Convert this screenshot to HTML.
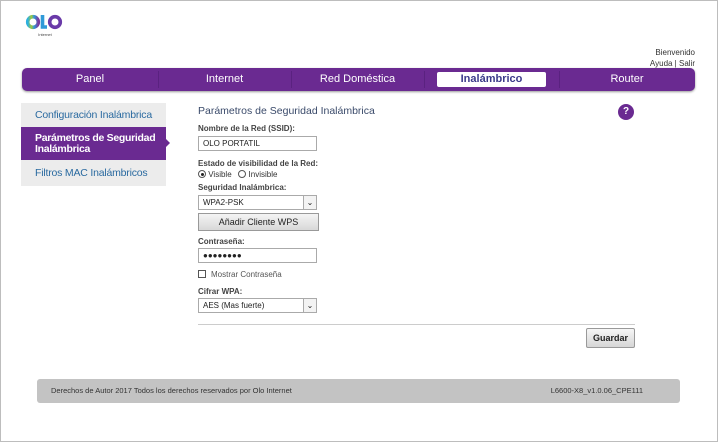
<!DOCTYPE html>
<html><head><meta charset="utf-8"><style>
*{margin:0;padding:0;box-sizing:border-box}
body{width:718px;height:442px;background:#fff;font-family:"Liberation Sans",Arial,sans-serif;position:relative;overflow:hidden}
.frame{position:absolute;left:0;top:0;width:718px;height:442px;border:1px solid #bdbdbd}
.abs{position:absolute}
.nav{left:22px;top:68px;width:673px;height:23px;background:#6a2a91;border-radius:5px;box-shadow:0 1px 2px #999}
.tab{position:absolute;top:0;height:23px;line-height:23px;color:#fff;font-size:11px;text-align:center}
.sep{position:absolute;top:3px;width:1px;height:17px;background:#5a2280}
.side{left:21px;width:145px;font-size:10.5px;padding-left:14px;background:#ececec;color:#2a6aa0;white-space:nowrap;letter-spacing:-0.2px}
.lbl{position:absolute;left:198px;font-size:8px;color:#444;font-weight:bold}
.inp{position:absolute;left:198px;width:119px;height:15px;border:1px solid #aaa;font-size:8px;line-height:13px;padding-left:4px;color:#222;background:#fff}
.dd{position:absolute;right:0;top:0;width:13px;height:13px;border-left:1px solid #aaa;background:#f3f3f3;font-size:8px;text-align:center;line-height:13px}
</style></head><body>
<div class="frame"></div>
<svg class="abs" style="left:25px;top:13px" width="40" height="26" viewBox="0 0 40 26">
<defs><linearGradient id="g" x1="0" x2="1"><stop offset="0" stop-color="#2bb0e0"/><stop offset=".35" stop-color="#a0c83c"/><stop offset=".6" stop-color="#2f9ad8"/><stop offset="1" stop-color="#7a3aa0"/></linearGradient></defs>
<circle cx="8" cy="9" r="5.3" fill="none" stroke="url(#g)" stroke-width="3.6"/>
<path d="M17.5 2v12h4.5" fill="none" stroke="#2f9ad8" stroke-width="3.6"/>
<circle cx="30" cy="9" r="5.3" fill="none" stroke="#6a3aa8" stroke-width="3.6"/>
<text x="20" y="23" font-size="4" text-anchor="middle" fill="#444" font-family="Liberation Sans">Internet</text>
</svg>
<div class="abs" style="right:23px;top:47px;font-size:8px;color:#333;text-align:right;line-height:11px">Bienvenido<br>Ayuda | Salir</div>
<div class="abs nav">
<div class="tab" style="left:0;width:136px">Panel</div><div class="sep" style="left:136px"></div>
<div class="tab" style="left:136px;width:133px">Internet</div><div class="sep" style="left:269px"></div>
<div class="tab" style="left:269px;width:133px">Red Doméstica</div><div class="sep" style="left:402px"></div>
<div class="abs" style="left:415px;top:4px;width:109px;height:15px;background:#fff;border-radius:2px;color:#3a3a8a;font-size:11px;font-weight:bold;text-align:center;line-height:15px">Inalámbrico</div>
<div class="sep" style="left:537px"></div>
<div class="tab" style="left:537px;width:136px">Router</div>
</div>
<div class="abs side" style="top:103px;height:24px;line-height:24px">Configuración Inalámbrica</div>
<div class="abs side" style="top:127px;height:33px;background:#6a2a91;color:#fff;font-weight:bold;line-height:11px;padding-top:6px;letter-spacing:-0.3px">Parámetros de Seguridad<br>Inalámbrica</div>
<div class="abs" style="left:166px;top:139px;width:0;height:0;border-top:4px solid transparent;border-bottom:4px solid transparent;border-left:4px solid #6a2a91"></div>
<div class="abs side" style="top:160px;height:26px;line-height:26px">Filtros MAC Inalámbricos</div>
<div class="abs" style="left:198px;top:105px;font-size:10.5px;color:#3a4a6a">Parámetros de Seguridad Inalámbrica</div>
<div class="abs" style="left:618px;top:104px;width:16px;height:16px;border-radius:50%;background:#6a2a91;color:#fff;font-size:10px;font-weight:bold;text-align:center;line-height:16px">?</div>
<div class="lbl" style="top:124px">Nombre de la Red (SSID):</div>
<div class="inp" style="top:136px">OLO PORTATIL</div>
<div class="lbl" style="top:159px">Estado de visibilidad de la Red:</div>
<div class="abs" style="left:198px;top:170px;font-size:8px;color:#333">
<span style="display:inline-block;width:8px;height:8px;border:1px solid #555;border-radius:50%;vertical-align:-1px;position:relative"><span style="position:absolute;left:1.5px;top:1.5px;width:3px;height:3px;border-radius:50%;background:#222"></span></span> Visible &nbsp;&nbsp;<span style="display:inline-block;width:8px;height:8px;border:1px solid #555;border-radius:50%;vertical-align:-1px"></span> Invisible</div>
<div class="lbl" style="top:183px">Seguridad Inalámbrica:</div>
<div class="inp" style="top:195px">WPA2-PSK<div class="dd">⌄</div></div>
<div class="abs" style="left:198px;top:213px;width:121px;height:18px;border:1px solid #999;background:linear-gradient(#f4f4f4,#d8d8d8);font-size:9px;text-align:center;line-height:16px;color:#222">Añadir Cliente WPS</div>
<div class="lbl" style="top:237px">Contraseña:</div>
<div class="inp" style="top:248px;font-weight:bold">●●●●●●●●</div>
<div class="abs" style="left:198px;top:270px;width:8px;height:8px;border:1px solid #555"></div>
<div class="abs" style="left:211px;top:270px;font-size:8px;color:#555">Mostrar Contraseña</div>
<div class="lbl" style="top:287px">Cifrar WPA:</div>
<div class="inp" style="top:298px">AES (Mas fuerte)<div class="dd">⌄</div></div>
<div class="abs" style="left:198px;top:324px;width:437px;height:1px;background:#ccc"></div>
<div class="abs" style="left:586px;top:328px;width:49px;height:20px;border:1px solid #999;border-radius:2px;background:linear-gradient(#f6f6f6,#d6d6d6);font-size:9px;font-weight:bold;text-align:center;line-height:18px;color:#222">Guardar</div>
<div class="abs" style="left:37px;top:379px;width:643px;height:24px;background:#c3c3c3;border-radius:3px;font-size:7.5px;color:#333;line-height:24px">
<span style="position:absolute;left:14px">Derechos de Autor 2017 Todos los derechos reservados por Olo Internet</span>
<span style="position:absolute;right:37px">L6600-X8_v1.0.06_CPE111</span></div>
</body></html>
